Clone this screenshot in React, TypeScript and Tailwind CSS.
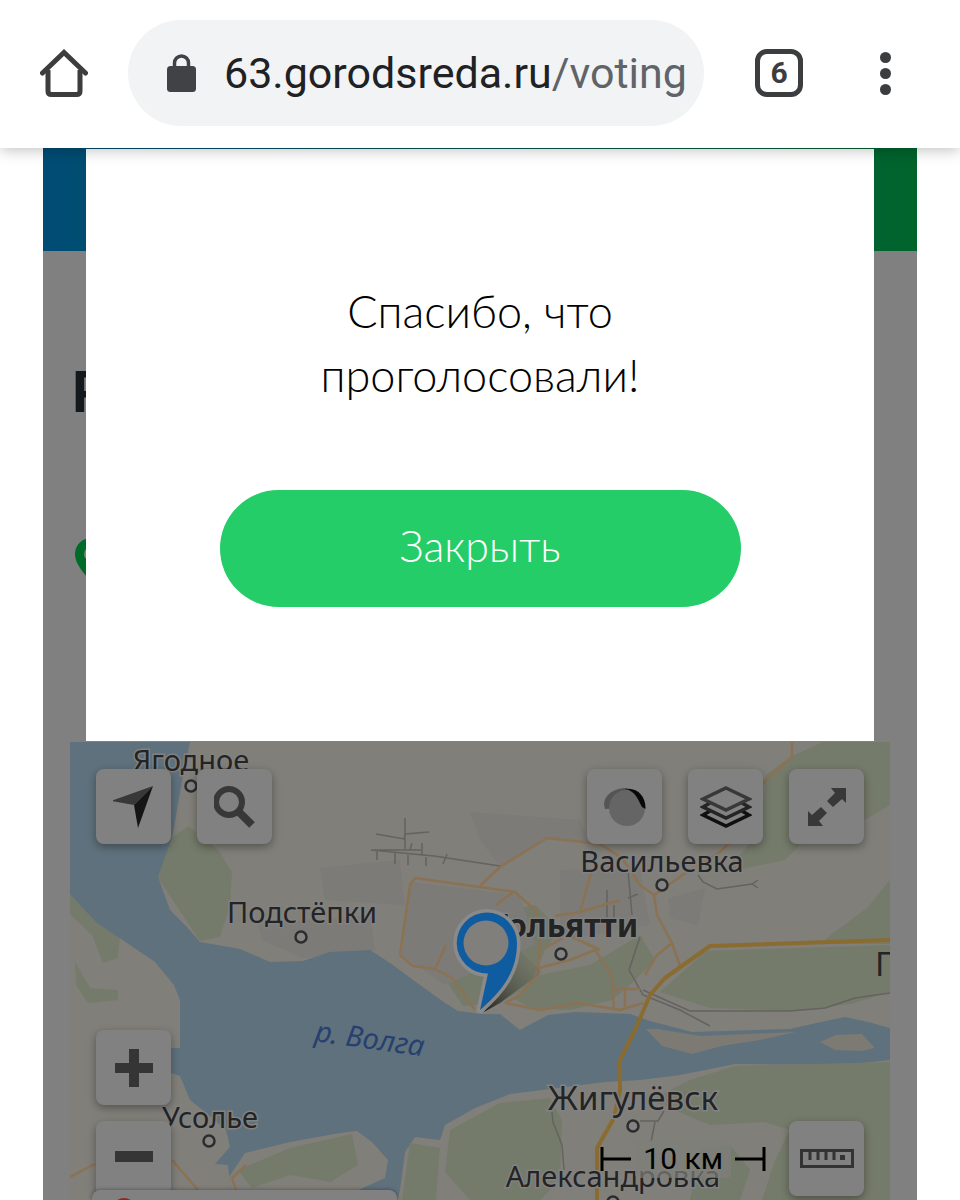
import type { ReactNode } from "react"

interface Place {
  name: string
  x: number
  y: number
  size: number
  bold?: boolean
  dot?: [number, number]
}

const places: Place[] = [
  { name: "Ягодное", x: 191, y: 771, size: 29, dot: [191, 786] },
  { name: "Подстёпки", x: 302, y: 923, size: 29, dot: [301, 937] },
  { name: "Васильевка", x: 662, y: 872, size: 29, dot: [662, 885] },
  { name: "Тольятти", x: 564, y: 937, size: 32, bold: true, dot: [561, 954] },
  { name: "Усолье", x: 210, y: 1128, size: 29, dot: [209, 1141] },
  { name: "Жигулёвск", x: 633, y: 1110, size: 33, dot: [633, 1126] },
  { name: "Александровка", x: 613, y: 1187, size: 29, dot: [613, 1202] },
]

interface MapButtonProps {
  label: string
  children: ReactNode
}

function MapButton({ label, children }: MapButtonProps) {
  return (
    <button
      type="button"
      aria-label={label}
      className="flex size-[75px] shrink-0 items-center justify-center rounded-lg bg-[#818181] shadow-[0_3px_8px_rgba(0,0,0,0.35)]"
    >
      {children}
    </button>
  )
}

function BrowserBar() {
  return (
    <header className="relative z-20 flex h-[148px] shrink-0 items-center bg-white pr-[57px] pb-[2px] pl-10 shadow-[0_2px_14px_rgba(0,0,0,0.25)]">
      <button type="button" aria-label="Домой" className="size-12 shrink-0">
        <svg viewBox="0 0 48 48" className="size-12" fill="none" stroke="#3c3d3f" strokeWidth="5">
          <path d="M8 21v21q0 3.500 3.500 3.500h25q3.500 0 3.500-3.500V21" />
          <path d="M2.500 24 24 3.500 45.500 24" strokeLinecap="round" />
        </svg>
      </button>
      <button
        type="button"
        className="ml-10 flex h-[106px] min-w-0 flex-1 items-center overflow-hidden rounded-full bg-[#f1f3f4] pl-[39px] font-['Roboto',sans-serif] text-[43px] whitespace-nowrap text-[#202124]"
      >
        <svg viewBox="0 0 29 38" className="mr-[28px] h-[38px] w-[29px] shrink-0">
          <rect y="12" width="29" height="26" rx="3.500" fill="#414246" />
          <path d="M7.500 14V9a7 7 0 0 1 14 0v5" fill="none" stroke="#414246" strokeWidth="3.500" />
        </svg>
        <span>63.gorodsreda.ru</span>
        <span className="text-[#606368]">/voting</span>
      </button>
      <button
        type="button"
        aria-label="Вкладки: 6"
        className="ml-[51px] flex size-12 shrink-0 items-center justify-center rounded-xl border-5 border-[#3c3d3f] font-['Roboto',sans-serif] text-[30px] leading-none font-bold text-[#3c3d3f]"
      >
        6
      </button>
      <button type="button" aria-label="Меню" className="ml-16 flex h-12 w-9 shrink-0 flex-col items-center justify-center gap-[5px]">
        <span className="size-[11px] rounded-full bg-[#3c3d3f]" />
        <span className="size-[11px] rounded-full bg-[#3c3d3f]" />
        <span className="size-[11px] rounded-full bg-[#3c3d3f]" />
      </button>
    </header>
  )
}

function MapCanvas() {
  return (
    <svg
      viewBox="70 742 820 458"
      preserveAspectRatio="xMidYMid slice"
      className="absolute inset-0 size-full"
      fontFamily="'Noto Sans', sans-serif"
    >
      <defs>
        <linearGradient id="pinShadow" x1="0" y1="1" x2="1" y2="0">
          <stop offset="0" stopColor="#24221e" />
          <stop offset="1" stopColor="#73776a" stopOpacity="0.1" />
        </linearGradient>
      </defs>
      <rect x="70" y="742" width="820" height="458" fill="#807f79" />

      {/* forest */}
      <g fill="#757b6b">
        <path d="M172 838 188 826 218 850 232 872 230 905 220 937 200 941 158 878Z" />
        <path d="M890 742H823L790 757 766 775 764 800 748 846 722 873 785 860 800 845 868 818 890 805Z" />
        <path d="M890 880 868 907 832 934 820 944H890Z" />
        <path d="M706 951 890 945V992L850 1004 790 1011 710 1008 660 992Z" />
        <path d="M70 894 120 935 118 958 103 963 92 935 70 914Z" />
        <path d="M75 962 90 988 118 990V1000L88 1003 76 985Z" />
        <path d="M447 982 470 950 510 910 535 905 560 930 545 950 530 985 500 1003 463 1006Z" />
        <path d="M513 998 540 975 590 965 640 935 655 960 630 985 612 1000 570 1010 530 1008Z" />
      </g>
      {/* settlements */}
      <g fill="#7d7b77">
        <path d="M470 812 580 820 590 842 545 838 500 866 480 840Z" />
        <path d="M410 882 520 895 535 945 445 985 402 955Z" />
        <path d="M258 925 370 915 375 950 303 958 262 940Z" />
        <path d="M320 868 400 860 405 905 325 900Z" />
        <path d="M560 870 640 868 650 925 560 940Z" />
        <path d="M668 898 705 888 698 925 670 918Z" />
      </g>

      {/* Volga */}
      <path
        fill="#5f717c"
        d="M70 742H190L184 770 172 838 158 877 170 910 186 926 200 942 240 949 270 962 303 961 330 952 370 950 390 963 420 985 445 1003 458 1011 482 1014 500 1014 520 1030 548 1015 575 1012 630 1014 650 1021 692 1032 790 1029 812 1024 845 1017 868 1022 890 1028V1060L845 1065 735 1064 680 1075 640 1080 605 1082 550 1089 510 1094 475 1108 445 1125 440 1140 415 1137 405 1152 400 1190 397 1200H232L228 1165 215 1164 230 1147 226 1130 205 1112 190 1100 180 1076 171 1073V1048H180V1000L174 985 155 962 130 945 97 923 80 905 70 894Z"
      />
      <path fill="#807f79" d="M232 1200 229 1177 245 1153 290 1142 340 1133 357 1131 372 1142 388 1160 385 1178 365 1187 338 1200Z" />
      <path fill="#757b6b" d="M238 1170 290 1148 352 1134 358 1165 330 1182 290 1175 252 1188Z" />
      <path fill="#7d7a73" d="M646 1029 658 1029 700 1036 796 1032 760 1040 722 1046 692 1054 662 1046Z" />
      <path fill="#7d7a73" d="M820 1042 836 1035 862 1034 875 1048 862 1051 835 1050Z" />

      {/* southern bank */}
      <g fill="#757b6b">
        <path d="M735 1066 890 1062V1200H762L775 1160 790 1130 764 1122 710 1125 650 1100 690 1080Z" />
        <path d="M450 1130 500 1103 550 1098 562 1120 560 1180 540 1200H470L445 1172Z" />
        <path d="M410 1143 440 1148 436 1200H402Z" />
        <path d="M700 1150 730 1145 750 1170 740 1200H690Z" />
      </g>

      {/* minor roads */}
      <g fill="none" stroke="#63635f" strokeWidth="1.500">
        <path d="M371 850h50M405 818v31M376 834l28 5 1-5 24-2M371 850l63 6 66 10M377 850v10M395 853v11M408 855v10M426 857v9M422 843v13M447 854l-4 10M412 843l-2 7" />
        <path d="M698 875 703 882 717 889 752 884 758 880M752 884l6 4" />
        <path d="M628 870 632 915M607 890v28M614 905v16M628 898l10-4M640 937 629 970 643 995 680 1010 710 1026" />
        <path d="M643 990 690 1011 790 1011 825 1008 855 998 890 993" />
        <path d="M552 1112 553 1122 562 1145 564 1170M640 1121h18l6-10M655 1122l-4 20" />
      </g>
      {/* regional roads */}
      <g fill="none" stroke="#8b7253" strokeWidth="2.500" strokeLinejoin="round">
        <path d="M400 955 410 885 415 878 515 892 535 910 541 930 538 975 520 995 505 1003" />
        <path d="M480 886 500 867 547 838 600 844 622 858 640 885 654 895 657 915 672 943 680 966" />
        <path d="M400 955 413 966 435 969 452 978 468 1000 475 1010" />
        <path d="M435 969 446 945M496 905 513 892M592 870 580 912 555 916M580 912 620 900" />
        <path d="M505 1003 540 1010 578 1003 620 1010 643 1003M531 970 570 960 595 950 612 975 614 1010M614 989H640M625 990v17" />
        <path d="M545 948 568 935 600 950M792 742V757L762 784V810L720 852 690 870 654 895M672 943 656 956 645 975" />
        <path d="M70 1177 95 1164M172 1160 198 1190M236 1190 232 1178 246 1165" />
      </g>
      {/* motorway */}
      <path
        d="M890 940 710 946 665 978 650 995 635 1030 620 1060V1090L614 1118 597 1148 597 1200"
        fill="none"
        stroke="#8a6b30"
        strokeWidth="4"
        strokeLinejoin="round"
      />

      {places.map((place) => (
        <g key={place.name}>
          {place.dot && (
            <circle cx={place.dot[0]} cy={place.dot[1]} r="5.500" fill="#838383" stroke="#2c2c2c" strokeWidth="2.500" />
          )}
          <text
            x={place.x}
            y={place.y}
            textAnchor="middle"
            fontSize={place.size}
            fontWeight={place.bold ? 700 : 400}
            fill="#242424"
            stroke="#828282"
            strokeWidth="3"
            paintOrder="stroke"
          >
            {place.name}
          </text>
        </g>
      ))}
      <text x="875" y="976" fontSize="33" fill="#242424">
        П
      </text>
      <text x="314" y="1041" fontSize="29" fontStyle="italic" fill="#27406f" transform="rotate(8 314 1041)">
        р. Волга
      </text>

      {/* selected point */}
      <path d="M484 1012 519 950 532 962 542 972 500 1003Z" fill="url(#pinShadow)" />
      <path
        d="M486.500 912.500a30.500 30.500 0 1 0 1.500 61L480 1010C506 988 517 968 517 943a30.500 30.500 0 0 0-30.500-30.500Z"
        fill="#105ca0"
        stroke="#8a8a8a"
        strokeWidth="7"
        paintOrder="stroke"
        strokeLinejoin="round"
      />
      <circle cx="486" cy="943" r="22.500" fill="#807f7c" />
    </svg>
  )
}

function VotingMap() {
  return (
    <section aria-label="Карта" className="relative mx-[27px] flex min-h-[458px] flex-1 overflow-hidden">
      <MapCanvas />
      <div className="relative flex flex-1 flex-col px-[26px] pt-[27px] pb-1">
        <div className="flex justify-between">
          <div className="flex gap-[26px]">
            <MapButton label="Моё местоположение">
              <svg viewBox="0 0 42 42" className="size-[42px]">
                <path d="M40 0-2 15 21 19Z" fill="#383838" />
                <path d="M40 0 21 19 25 42Z" fill="#151515" />
              </svg>
            </MapButton>
            <MapButton label="Поиск">
              <svg viewBox="0 0 42 42" className="size-[42px]" fill="none" stroke="#383838">
                <circle cx="15" cy="16" r="13" strokeWidth="6" />
                <path d="m24 25 14 14" strokeWidth="8" />
              </svg>
            </MapButton>
          </div>
          <div className="flex gap-[26px]">
            <MapButton label="Панорамы">
              <svg viewBox="0 0 42 38" className="h-[38px] w-[42px]">
                <path d="M1 21C-3 10 7 0 23 0v20Z" fill="#555" />
                <circle cx="23" cy="20" r="18" fill="#656565" />
                <path d="M21 1C34-1 42 9 41.500 21L38 19C34 12 32 3 21 1Z" fill="#080808" />
              </svg>
            </MapButton>
            <MapButton label="Слои">
              <svg viewBox="0 0 52 42" className="h-[42px] w-[52px]" fill="none" strokeWidth="3.500">
                <path d="M10 25 3 29l23 11 23-11-7-4" stroke="#101010" />
                <path d="M10 17 3 21l23 11 23-11-7-4" stroke="#242424" />
                <path d="M26 2 49 13 26 24 3 13Z" stroke="#383838" />
              </svg>
            </MapButton>
            <MapButton label="На весь экран">
              <svg viewBox="0 0 38 38" className="size-[38px]" fill="#383838">
                <path d="M23 0H38V15L34 11 25 19 19 13 27 5Z" />
                <path d="M15 38H0V23L4 27 13 19 19 25 11 33Z" />
              </svg>
            </MapButton>
          </div>
        </div>
        <div className="mt-auto flex items-end justify-between">
          <div className="flex flex-col gap-4">
            <MapButton label="Приблизить">
              <svg viewBox="0 0 38 38" className="size-[38px]" fill="#353535">
                <path d="M14 0H24V14H38V24H24V38H14V24H0V14H14Z" />
              </svg>
            </MapButton>
            <MapButton label="Отдалить">
              <svg viewBox="0 0 38 16" className="h-4 w-[38px]" fill="#353535">
                <path d="M0 0H38V11H0Z" />
              </svg>
            </MapButton>
          </div>
          <div className="flex items-center gap-[23px]">
            <div className="flex items-center gap-1 font-['Roboto',sans-serif] text-[30px] leading-none text-black">
              <svg viewBox="0 0 31 24" className="h-6 w-[31px]" fill="none" stroke="#000" strokeWidth="3">
                <path d="M2 0v24M2 12h29" />
              </svg>
              <span className="rounded-sm bg-[#7f7f7a]/70 px-2 py-1">10 км</span>
              <svg viewBox="0 0 31 24" className="h-6 w-[31px]" fill="none" stroke="#000" strokeWidth="3">
                <path d="M29 0v24M29 12H0" />
              </svg>
            </div>
            <MapButton label="Линейка">
              <svg viewBox="0 0 54 19" className="h-[19px] w-[54px]" fill="none" stroke="#333" strokeWidth="3">
                <path d="M1.500 1.500h51v16h-51ZM10 2v9M18 2v9M26 2v9M34 2v9" />
                <path d="M40 6h5v5h-5Z" fill="#333" stroke="none" />
              </svg>
            </MapButton>
          </div>
        </div>
      </div>
      {/* top edge of the route panel, the rest is below the fold */}
      <div className="absolute bottom-0 left-[22px] h-[10px] w-[305px] overflow-hidden rounded-t-lg bg-[#818181] shadow-[0_0_4px_rgba(0,0,0,0.4)]">
        <div className="mt-[8px] ml-[20px] size-6 rounded-full bg-[#8c2a1c]" />
      </div>
    </section>
  )
}

function ThankYouDialog() {
  return (
    <div
      role="dialog"
      aria-labelledby="thanks"
      className="absolute inset-x-[43px] top-px z-10 flex flex-col items-center gap-[83px] bg-white pt-[130px] pb-[134px] font-['Lato',sans-serif] font-light"
    >
      <h2 id="thanks" className="text-center text-[45px] leading-[64px] text-black">
        Спасибо, что
        <br />
        проголосовали!
      </h2>
      <button type="button" className="h-[117px] w-[521px] max-w-[80%] rounded-full bg-[#24cd67] pb-1 text-[43px] text-white">
        Закрыть
      </button>
    </div>
  )
}

export default function App() {
  return (
    <div className="flex min-h-screen flex-col bg-white">
      <BrowserBar />
      <main className="relative mx-[43px] flex flex-1 flex-col bg-[#808080]">
        <div className="h-[103px] bg-linear-to-r from-[#004c75] to-[#00642b]" />
        <div className="flex h-[491px] flex-col gap-[114px] pt-[109px] pl-[29px]">
          <h1 className="font-['Roboto',sans-serif] text-[58px] leading-[64px] font-bold text-[#14191d]">Р</h1>
          <svg viewBox="0 0 32 44" className="ml-[3px] h-11 w-8">
            <path d="M16 0C7 0 0 7 0 16c0 10 8 18 16 28 8-10 16-18 16-28C32 7 25 0 16 0Z" fill="#006b28" />
            <circle cx="16" cy="16" r="7" fill="#808080" />
          </svg>
        </div>
        <VotingMap />
        <ThankYouDialog />
      </main>
    </div>
  )
}
